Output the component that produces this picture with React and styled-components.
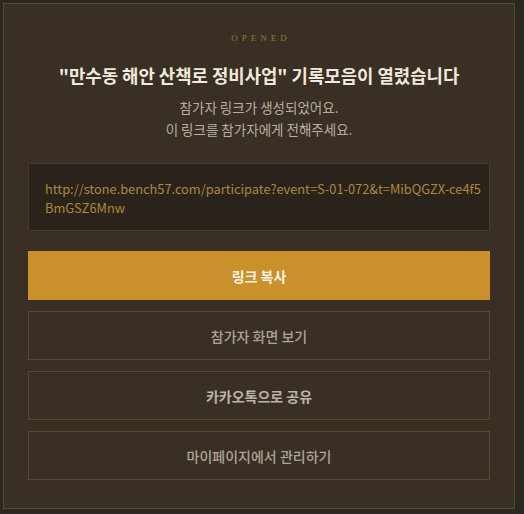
import React from "react";
import styled, { createGlobalStyle } from "styled-components";

const GlobalStyle = createGlobalStyle`
  html, body {
    margin: 0;
    padding: 0;
    background: #2b2723;
  }
  body {
    font-family: "Noto Sans CJK KR", "Noto Sans", sans-serif;
  }
`;

const Page = styled.div`
  padding: 3px 9px 0 3px;
`;

const Card = styled.div`
  background: #392f24;
  border: 1px solid #5b4a2c;
  padding: 27px 24px 28px 24px;
  display: flex;
  flex-direction: column;
  align-items: stretch;
`;

const Eyebrow = styled.div`
  font-family: "Liberation Serif", "DejaVu Serif", serif;
  font-size: 9px;
  letter-spacing: 4px;
  padding-left: 4px;
  color: #9a7736;
  text-align: center;
  line-height: 14px;
`;

const Title = styled.h1`
  margin: 17px 0 0;
  font-size: 17.8px;
  font-weight: 700;
  color: #f1eadb;
  text-align: center;
  line-height: 26px;
`;

const Subtitle = styled.p`
  margin: 8px 0 0;
  font-size: 13.5px;
  line-height: 22px;
  color: #b9ae9d;
  text-align: center;
`;

const LinkBox = styled.div`
  margin-top: 23px;
  background: #2a231b;
  border: 1px solid #4a3b22;
  padding: 15px 6px 13px 16px;
  font-family: "Noto Sans CJK KR", sans-serif;
  font-size: 12.8px;
  line-height: 19px;
  color: #ad873c;
  word-break: break-all;
`;

const Actions = styled.div`
  margin-top: 20px;
  display: flex;
  flex-direction: column;
  gap: 11px;
`;

const Button = styled.button`
  height: 49px;
  border: 1px solid ${(p) => (p.$primary ? "#c9902c" : "#5b4829")};
  background: ${(p) => (p.$primary ? "#c9902c" : "transparent")};
  color: ${(p) => (p.$primary ? "#fbf4e6" : p.$strong ? "#bdb4a3" : "#ada493")};
  font-family: "Noto Sans CJK KR", sans-serif;
  font-size: 14px;
  font-weight: ${(p) => (p.$primary || p.$strong ? 700 : 500)};
  cursor: pointer;
`;

const actions = [
  { label: "참가자 화면 보기" },
  { label: "카카오톡으로 공유", strong: true },
  { label: "마이페이지에서 관리하기" },
];

export default function App() {
  return (
    <>
      <GlobalStyle />
      <Page>
        <Card>
          <Eyebrow>OPENED</Eyebrow>
          <Title>"만수동 해안 산책로 정비사업" 기록모음이 열렸습니다</Title>
          <Subtitle>
            참가자 링크가 생성되었어요.
            <br />이 링크를 참가자에게 전해주세요.
          </Subtitle>
          <LinkBox>
            http://stone.bench57.com/participate?event=S-01-072&amp;t=MibQGZX-ce4f5BmGSZ6Mnw
          </LinkBox>
          <Actions>
            <Button $primary>링크 복사</Button>
            {actions.map((a) => (
              <Button key={a.label} $strong={a.strong}>
                {a.label}
              </Button>
            ))}
          </Actions>
        </Card>
      </Page>
    </>
  );
}
